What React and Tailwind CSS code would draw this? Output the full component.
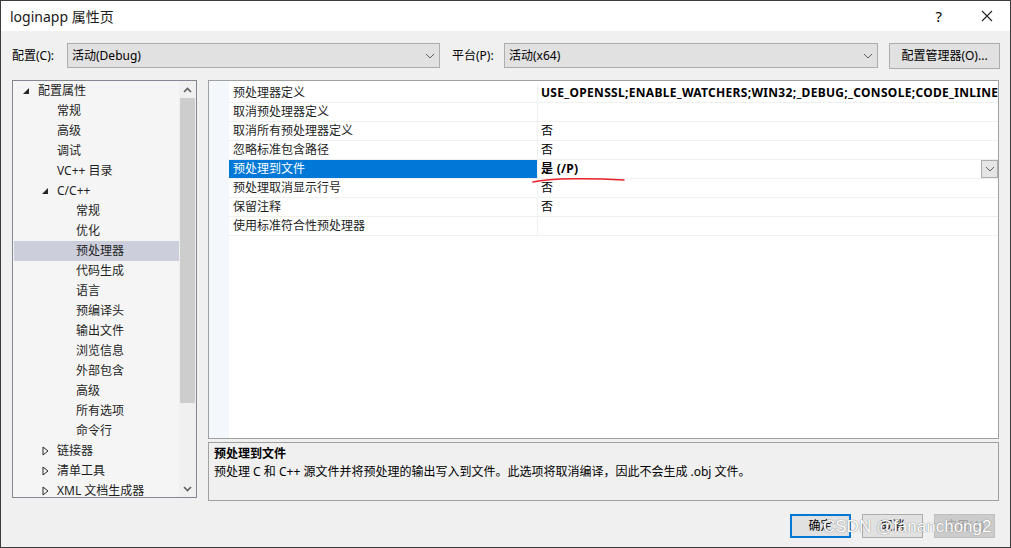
import React from 'react';

const FONT = { fontFamily: '"Noto Sans", "Noto Sans CJK SC", sans-serif' };

const treeItems = [
  { label: '配置属性', level: 0, arrow: 'open' },
  { label: '常规', level: 1 },
  { label: '高级', level: 1 },
  { label: '调试', level: 1 },
  { label: 'VC++ 目录', level: 1 },
  { label: 'C/C++', level: 1, arrow: 'open' },
  { label: '常规', level: 2 },
  { label: '优化', level: 2 },
  { label: '预处理器', level: 2, selected: true },
  { label: '代码生成', level: 2 },
  { label: '语言', level: 2 },
  { label: '预编译头', level: 2 },
  { label: '输出文件', level: 2 },
  { label: '浏览信息', level: 2 },
  { label: '外部包含', level: 2 },
  { label: '高级', level: 2 },
  { label: '所有选项', level: 2 },
  { label: '命令行', level: 2 },
  { label: '链接器', level: 1, arrow: 'closed' },
  { label: '清单工具', level: 1, arrow: 'closed' },
  { label: 'XML 文档生成器', level: 1, arrow: 'closed' },
];

const props = [
  { name: '预处理器定义', value: 'USE_OPENSSL;ENABLE_WATCHERS;WIN32;_DEBUG;_CONSOLE;CODE_INLINE', bold: true },
  { name: '取消预处理器定义', value: '' },
  { name: '取消所有预处理器定义', value: '否' },
  { name: '忽略标准包含路径', value: '否' },
  { name: '预处理到文件', value: '是 (/P)', bold: true, selected: true },
  { name: '预处理取消显示行号', value: '否' },
  { name: '保留注释', value: '否' },
  { name: '使用标准符合性预处理器', value: '' },
];

const Chevron = ({ className }) => (
  <svg width="10" height="6" viewBox="0 0 10 6" className={className}>
    <path d="M1 1 L5 5 L9 1" fill="none" stroke="#606060" strokeWidth="1" />
  </svg>
);

const Select = ({ value, className }) => (
  <div className={`h-[25px] bg-[#e1e1e1] border border-[#adadad] flex items-center justify-between pl-[4px] pr-[4px] ${className}`}>
    <span>{value}</span>
    <Chevron />
  </div>
);

const TreeArrow = ({ type }) => {
  if (type === 'open') {
    return (
      <svg width="7" height="7" viewBox="0 0 7 7">
        <path d="M6 0 L6 6 L0 6 Z" fill="#262626" />
      </svg>
    );
  }
  return (
    <svg width="7" height="10" viewBox="0 0 7 10">
      <path d="M1 1 L6 5 L1 9 Z" fill="none" stroke="#262626" strokeWidth="1" />
    </svg>
  );
};

const Tree = () => (
  <div className="w-[185px] h-[418px] border border-[#828790] bg-[#f5f5f5] flex overflow-hidden">
    <div className="flex-1 pl-px overflow-hidden">
      {treeItems.map((it, i) => (
        <div
          key={i}
          className={`h-[20px] flex items-center ${it.selected ? 'bg-[#cccedb]' : ''}`}
        >
          <div
            className={`w-[10px] flex justify-center shrink-0 ${it.level === 0 ? 'ml-[7px]' : it.level === 1 ? 'ml-[26px]' : 'ml-[45px]'}`}
          >
            {it.arrow && <TreeArrow type={it.arrow} />}
          </div>
          <span className="ml-[7px] whitespace-nowrap text-[#1e1e1e]">{it.label}</span>
        </div>
      ))}
    </div>
    <div className="w-[17px] bg-[#f0f0f0] flex flex-col shrink-0">
      <div className="h-[17px] flex items-center justify-center">
        <svg width="9" height="6" viewBox="0 0 9 6">
          <path d="M1 5 L4.5 1.5 L8 5" fill="none" stroke="#606060" strokeWidth="1.6" />
        </svg>
      </div>
      <div className="mx-[1px] h-[305px] bg-[#cdcdcd]" />
      <div className="flex-1" />
      <div className="h-[17px] flex items-center justify-center">
        <svg width="9" height="6" viewBox="0 0 9 6">
          <path d="M1 1 L4.5 4.5 L8 1" fill="none" stroke="#606060" strokeWidth="1.6" />
        </svg>
      </div>
    </div>
  </div>
);

const Grid = () => (
  <div className="h-[359px] border border-[#a0a0a0] bg-white flex">
    <div className="w-[20px] bg-[#f4f7fc] shrink-0" />
    <div className="flex-1 overflow-hidden pt-[3px]">
      {props.map((p, i) => (
        <div key={i} className="h-[19px] flex border-b border-[#f0f0f0]">
          <div
            className={`w-[309px] shrink-0 flex items-center pl-[4px] border-r border-[#f0f0f0] ${p.selected ? 'bg-[#0078d7] text-white' : 'text-[#1e1e1e]'}`}
          >
            {p.name}
          </div>
          <div className="flex-1 flex items-center pl-[3px] overflow-hidden relative">
            <span className={`whitespace-nowrap ${p.bold ? 'font-bold tracking-[0.3px]' : ''}`}>{p.value}</span>
            {p.selected && (
              <div className="absolute right-0 top-0 w-[17px] h-[18px] bg-[#e5e5e5] border border-[#adadad] flex items-center justify-center">
                <Chevron />
              </div>
            )}
          </div>
        </div>
      ))}
    </div>
  </div>
);

const Button = ({ children, variant }) => {
  const cls =
    variant === 'primary'
      ? 'border-2 border-[#0078d7] bg-[#e1e1e1] text-black'
      : variant === 'disabled'
      ? 'border border-[#bfbfbf] bg-[#cccccc] text-[#a0a0a0]'
      : 'border border-[#adadad] bg-[#e1e1e1] text-black';
  return (
    <div className={`w-[61px] h-[24px] flex items-center justify-center ${cls}`}>{children}</div>
  );
};

export default function App() {
  return (
    <div
      style={FONT}
      className="relative w-[1011px] h-[548px] bg-[#f0f0f0] border border-[#3c3c3c] text-[12px] text-black overflow-hidden flex flex-col"
    >
      {/* title bar */}
      <div className="h-[30px] bg-white flex items-center justify-between shrink-0">
        <span className="ml-[9px] text-[14px] text-[#1a1a1a]">loginapp 属性页</span>
        <div className="flex items-center">
          <span className="text-[15px] mr-[39px]">?</span>
          <svg width="12" height="12" viewBox="0 0 12 12" className="mr-[17px]">
            <path d="M1 1 L11 11 M11 1 L1 11" stroke="#222" strokeWidth="1.1" />
          </svg>
        </div>
      </div>

      {/* config row */}
      <div className="mt-[12px] h-[25px] flex items-center shrink-0">
        <span className="ml-[11px] w-[55px]">配置(C):</span>
        <Select value="活动(Debug)" className="w-[373px]" />
        <span className="ml-[12px] w-[52px]">平台(P):</span>
        <Select value="活动(x64)" className="w-[374px]" />
        <div className="ml-[11px] w-[111px] h-[26px] bg-[#e1e1e1] border border-[#adadad] flex items-center justify-center">
          配置管理器(O)...
        </div>
      </div>

      {/* panels */}
      <div className="mt-[12px] flex ml-[11px] gap-[11px]">
        <Tree />
        <div className="w-[791px] flex flex-col gap-[3px]">
          <Grid />
          <div className="h-[59px] border border-[#a0a0a0] bg-[#f0f0f0] px-[5px] pt-[2px] leading-[18px]">
            <div className="font-bold">预处理到文件</div>
            <div>预处理 C 和 C++ 源文件并将预处理的输出写入到文件。此选项将取消编译，因此不会生成 .obj 文件。</div>
          </div>
        </div>
      </div>

      {/* buttons */}
      <div className="mt-[13px] flex justify-end gap-[11px] mr-[15px]">
        <Button variant="primary">确定</Button>
        <Button>取消</Button>
        <Button variant="disabled">应用(A)</Button>
      </div>

      {/* red hand-drawn underline */}
      <svg className="absolute left-[530px] top-[173px]" width="100" height="12" viewBox="0 0 100 12">
        <path d="M2 8 C 20 4, 60 4, 93 6" fill="none" stroke="#e8202a" strokeWidth="1.5" strokeLinecap="round" />
      </svg>

      {/* watermark */}
      <div
        className="absolute left-[822px] top-[513px] text-[17px] text-white [text-shadow:0_0_1px_#8a8a8a,0_0_1px_#8a8a8a]"
        style={{ fontFamily: '"Liberation Sans", sans-serif' }}
      >
        CSDN @fananchong2
      </div>
    </div>
  );
}
